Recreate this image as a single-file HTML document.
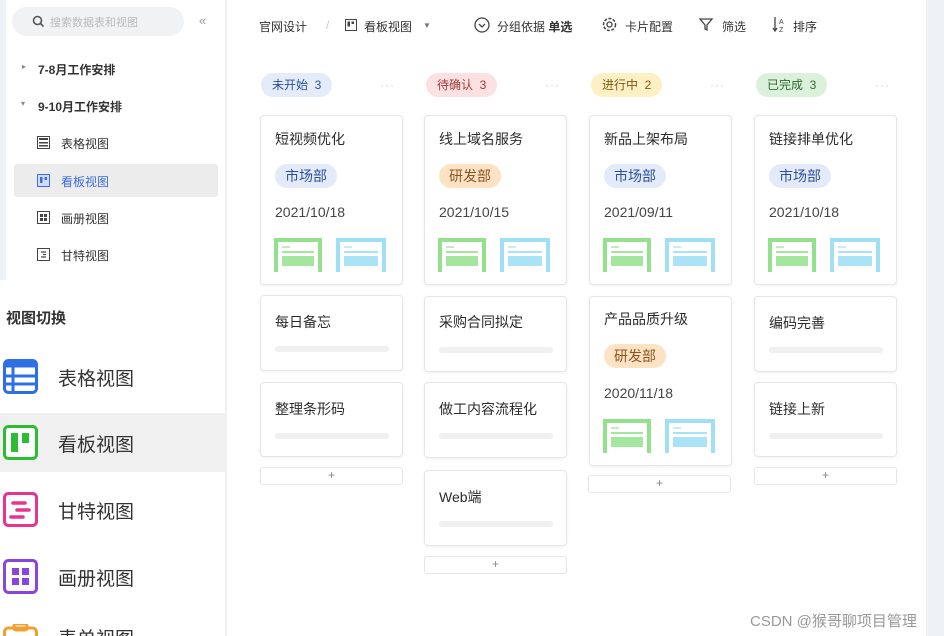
<!DOCTYPE html>
<html style="width:944px;height:636px;overflow:hidden"><head><meta charset="utf-8"><style>
*{margin:0;padding:0;box-sizing:border-box}
body{width:944px;height:636px;overflow:hidden;background:#fff;position:relative;font-family:"Liberation Sans","Noto Sans CJK SC",sans-serif;color:#333}
.a{position:absolute}
.card{position:absolute;width:143px;background:#fff;border:1px solid #e6e6e6;border-radius:4px;box-shadow:0 1px 3px rgba(0,0,0,.06)}
.t{position:absolute;left:14px;font-size:14px;color:#2b2b2b;line-height:16px}
.tag{position:absolute;left:14px;height:24px;line-height:24px;padding:0 10px;border-radius:12px;font-size:14px}
.mk{background:#e3ebfa;color:#2d4f9a}
.yf{background:#fde3c4;color:#8a5420}
.d{position:absolute;left:14px;font-size:14px;color:#444;line-height:16px}
.bar{position:absolute;left:14px;width:114px;height:6px;border-radius:3px;background:#f0f0f0}
.th{position:absolute}
.plus{position:absolute;width:143px;height:18px;border:1px solid #e6e6e6;border-radius:3px;text-align:center;font-size:12px;line-height:15px;color:#888;background:#fff}
.pill{position:absolute;top:73px;height:24px;line-height:24px;padding:0 11px;border-radius:12px;font-size:12px}
.dots{position:absolute;top:78px;font-size:12px;color:#ccc;letter-spacing:1px}
.si{position:absolute;font-size:12px;color:#333}
.lv{position:absolute;left:58px;font-size:19px;color:#333}
.tb{position:absolute;top:18px;font-size:12px;color:#333}
</style></head><body>
<div class="a" style="left:0;top:0;width:6px;height:280px;background:#eef1f6"></div>
<div class="a" style="left:12px;top:7px;width:172px;height:29px;border-radius:15px;background:#f1f2f4"></div>
<svg class="a" style="left:32px;top:15px" width="13" height="13" viewBox="0 0 13 13"><circle cx="5.5" cy="5.5" r="4" fill="none" stroke="#555" stroke-width="1.6"/><path d="M8.5 8.5L11.5 11.5" stroke="#555" stroke-width="1.6"/></svg>
<div class="si" style="left:50px;top:14px;color:#bbb;font-size:11px">搜索数据表和视图</div>
<div class="si" style="left:199px;top:13px;color:#999;font-size:13px">«</div>
<div class="si" style="left:22px;top:62px;font-size:8px;color:#888">▸</div>
<div class="si" style="left:38px;top:61px;font-weight:bold;font-size:12px">7-8月工作安排</div>
<div class="si" style="left:21px;top:99px;font-size:8px;color:#888">▾</div>
<div class="si" style="left:38px;top:98px;font-weight:bold;font-size:12px">9-10月工作安排</div>
<div class="a" style="left:14px;top:164px;width:204px;height:33px;background:#ececec;border-radius:3px"></div>
<svg class="a" style="left:37px;top:136px" width="13" height="13"><rect x="0.5" y="0.5" width="12" height="12" fill="#fff" stroke="#444"/><rect x="2" y="2" width="9" height="2" fill="#444"/><rect x="2" y="6" width="9" height="1.5" fill="#444"/><rect x="2" y="9" width="9" height="1.5" fill="#444"/></svg>
<div class="si" style="left:61px;top:135px">表格视图</div>
<svg class="a" style="left:37px;top:174px" width="13" height="13"><rect x="0.5" y="0.5" width="12" height="12" fill="#cfdcfb" stroke="#3d6de0"/><rect x="3" y="3" width="2.5" height="6" fill="#3d6de0"/><rect x="7.5" y="3" width="2.5" height="3" fill="#3d6de0"/></svg>
<div class="si" style="left:61px;top:173px;color:#3d6de0">看板视图</div>
<svg class="a" style="left:37px;top:211px" width="13" height="13"><rect x="0.5" y="0.5" width="12" height="12" fill="#fff" stroke="#444"/><rect x="3" y="3" width="3" height="3" fill="#444"/><rect x="7" y="3" width="3" height="3" fill="#444"/><rect x="3" y="7" width="3" height="3" fill="#444"/><rect x="7" y="7" width="3" height="3" fill="#444"/></svg>
<div class="si" style="left:61px;top:210px">画册视图</div>
<svg class="a" style="left:37px;top:248px" width="13" height="13"><rect x="0.5" y="0.5" width="12" height="12" fill="#fff" stroke="#444"/><path d="M4 4h5M6 6.5h3M4 9h5" stroke="#444" stroke-width="1.3"/></svg>
<div class="si" style="left:61px;top:247px">甘特视图</div>
<div class="a" style="left:225px;top:0;width:2px;height:636px;background:#f0f0f0"></div>
<div class="si" style="left:6px;top:307px;font-size:15px;font-weight:bold">视图切换</div>
<svg class="a" style="left:3px;top:359px" width="35" height="35"><rect x="1.5" y="1.5" width="32" height="32" rx="4" fill="#fff" stroke="#2f6fe4" stroke-width="3"/><rect x="1.5" y="1.5" width="32" height="7" fill="#2f6fe4"/><path d="M10 8v25M2 17h31M2 25h31" stroke="#2f6fe4" stroke-width="3"/></svg>
<div class="lv" style="top:364px">表格视图</div>
<div class="a" style="left:0;top:413px;width:225px;height:59px;background:#f0f0f0"></div>
<svg class="a" style="left:3px;top:425px" width="35" height="35"><rect x="1.5" y="1.5" width="32" height="32" rx="4" fill="#fff" stroke="#2dbd33" stroke-width="3"/><rect x="8" y="8" width="7" height="19" fill="#2dbd33"/><rect x="19" y="8" width="7" height="10" fill="#2dbd33"/></svg>
<div class="lv" style="top:430px">看板视图</div>
<svg class="a" style="left:3px;top:492px" width="35" height="35"><rect x="1.5" y="1.5" width="32" height="32" rx="4" fill="#fff" stroke="#e8348f" stroke-width="3"/><path d="M10 11h12M14 18h12M8 25h12" stroke="#e8348f" stroke-width="3.5" stroke-linecap="round"/></svg>
<div class="lv" style="top:497px">甘特视图</div>
<svg class="a" style="left:3px;top:559px" width="35" height="35"><rect x="1.5" y="1.5" width="32" height="32" rx="4" fill="#fff" stroke="#8a44e0" stroke-width="3"/><rect x="9" y="9" width="7" height="7" fill="#8a44e0"/><rect x="19" y="9" width="7" height="7" fill="#8a44e0"/><rect x="9" y="19" width="7" height="7" fill="#8a44e0"/><rect x="19" y="19" width="7" height="7" fill="#8a44e0"/></svg>
<div class="lv" style="top:564px">画册视图</div>
<svg class="a" style="left:3px;top:624px" width="35" height="12"><rect x="1.5" y="4" width="32" height="20" rx="4" fill="#fff" stroke="#f0a030" stroke-width="3"/><rect x="11" y="0" width="13" height="6" rx="2" fill="none" stroke="#f0a030" stroke-width="3"/></svg>
<div class="lv" style="top:624px">表单视图</div>
<div class="a" style="left:926px;top:0;width:18px;height:636px;background:#eef1f6"></div>
<div class="tb" style="left:259px">官网设计</div>
<div class="tb" style="left:326px;color:#ccc">/</div>
<svg class="a" style="left:345px;top:19px" width="12" height="12"><rect x="0.5" y="0.5" width="11" height="11" fill="#fff" stroke="#444"/><rect x="2.5" y="2.5" width="2.5" height="5" fill="#444"/><rect x="6.5" y="2.5" width="2.5" height="2.5" fill="#444"/></svg>
<div class="tb" style="left:364px">看板视图</div>
<div class="tb" style="left:423px;font-size:8px;top:21px;color:#777">▼</div>
<svg class="a" style="left:474px;top:17px" width="16" height="16"><circle cx="8" cy="8" r="7" fill="none" stroke="#444" stroke-width="1.3"/><path d="M5 7l3 3 3-3" fill="none" stroke="#444" stroke-width="1.3"/></svg>
<div class="tb" style="left:497px">分组依据 <b>单选</b></div>
<svg class="a" style="left:602px;top:17px" width="15" height="15"><circle cx="7.5" cy="7.5" r="6" fill="none" stroke="#444" stroke-width="1.5" stroke-dasharray="3 1.5"/><circle cx="7.5" cy="7.5" r="2.5" fill="none" stroke="#444" stroke-width="1.3"/></svg>
<div class="tb" style="left:625px">卡片配置</div>
<svg class="a" style="left:699px;top:17px" width="15" height="15"><path d="M1 2h12l-5 6v5l-2-1V8z" fill="none" stroke="#444" stroke-width="1.3"/></svg>
<div class="tb" style="left:722px">筛选</div>
<svg class="a" style="left:772px;top:16px" width="16" height="17"><path d="M3 1v14M1 12l2 3 2-3" fill="none" stroke="#444" stroke-width="1.3"/><text x="7" y="8" font-size="7" fill="#444" font-family="Liberation Sans">A</text><text x="7" y="16" font-size="7" fill="#444" font-family="Liberation Sans">Z</text></svg>
<div class="tb" style="left:793px">排序</div>
<div class="pill" style="left:261px;background:#e4ecfa;color:#2d4f9a">未开始&nbsp; 3</div>
<div class="dots" style="left:380px">···</div>
<div class="pill" style="left:426px;background:#fbe1e1;color:#a23a3a">待确认&nbsp; 3</div>
<div class="dots" style="left:545px">···</div>
<div class="pill" style="left:591px;background:#fdf0c4;color:#7a5a10">进行中&nbsp; 2</div>
<div class="dots" style="left:710px">···</div>
<div class="pill" style="left:756px;background:#dcf1dc;color:#2f6a2f">已完成&nbsp; 3</div>
<div class="dots" style="left:875px">···</div>
<svg width="0" height="0" style="position:absolute"><defs>
<g id="tg"><rect x="0" y="0" width="48" height="4" fill="#93e08d"/><rect x="0" y="0" width="4" height="34" fill="#93e08d"/><rect x="44" y="0" width="4" height="34" fill="#93e08d"/><rect x="8" y="8" width="8" height="2" fill="#bfeebb"/><rect x="8" y="13" width="32" height="2" fill="#a5e69f"/><rect x="8" y="18" width="32" height="10" fill="#a5e69f"/></g>
<g id="tb"><rect x="0" y="0" width="50" height="4" fill="#9fe0f5"/><rect x="0" y="0" width="4" height="34" fill="#9fe0f5"/><rect x="46" y="0" width="4" height="34" fill="#9fe0f5"/><rect x="8" y="8" width="8" height="2" fill="#c6ecf8"/><rect x="8" y="13" width="34" height="2" fill="#a9e3f5"/><rect x="8" y="18" width="34" height="10" fill="#a9e3f5"/></g>
</defs></svg>
<div class="card" style="left:260px;top:115px;height:170px"><div class="t" style="top:15px">短视频优化</div><div class="tag mk" style="top:48px">市场部</div><div class="d" style="top:88px">2021/10/18</div><svg class="th" style="left:13px;top:122px" width="112" height="34"><use href="#tg"/><use href="#tb" x="62"/></svg></div>
<div class="card" style="left:260px;top:295px;height:76px"><div class="t" style="top:18px">每日备忘</div><div class="bar" style="top:50px"></div></div>
<div class="card" style="left:260px;top:382px;height:75px"><div class="t" style="top:18px">整理条形码</div><div class="bar" style="top:50px"></div></div>
<div class="plus" style="left:260px;top:467px">+</div>
<div class="card" style="left:424px;top:115px;height:170px"><div class="t" style="top:15px">线上域名服务</div><div class="tag yf" style="top:48px">研发部</div><div class="d" style="top:88px">2021/10/15</div><svg class="th" style="left:13px;top:122px" width="112" height="34"><use href="#tg"/><use href="#tb" x="62"/></svg></div>
<div class="card" style="left:424px;top:296px;height:76px"><div class="t" style="top:17px">采购合同拟定</div><div class="bar" style="top:50px"></div></div>
<div class="card" style="left:424px;top:382px;height:76px"><div class="t" style="top:18px">做工内容流程化</div><div class="bar" style="top:50px"></div></div>
<div class="card" style="left:424px;top:470px;height:76px"><div class="t" style="top:18px">Web端</div><div class="bar" style="top:50px"></div></div>
<div class="plus" style="left:424px;top:556px">+</div>
<div class="card" style="left:589px;top:115px;height:170px"><div class="t" style="top:15px">新品上架布局</div><div class="tag mk" style="top:48px">市场部</div><div class="d" style="top:88px">2021/09/11</div><svg class="th" style="left:13px;top:122px" width="112" height="34"><use href="#tg"/><use href="#tb" x="62"/></svg></div>
<div class="card" style="left:589px;top:296px;height:170px"><div class="t" style="top:14px">产品品质升级</div><div class="tag yf" style="top:47px">研发部</div><div class="d" style="top:88px">2020/11/18</div><svg class="th" style="left:13px;top:122px" width="112" height="34"><use href="#tg"/><use href="#tb" x="62"/></svg></div>
<div class="plus" style="left:588px;top:475px">+</div>
<div class="card" style="left:754px;top:115px;height:170px"><div class="t" style="top:15px">链接排单优化</div><div class="tag mk" style="top:48px">市场部</div><div class="d" style="top:88px">2021/10/18</div><svg class="th" style="left:13px;top:122px" width="112" height="34"><use href="#tg"/><use href="#tb" x="62"/></svg></div>
<div class="card" style="left:754px;top:296px;height:76px"><div class="t" style="top:18px">编码完善</div><div class="bar" style="top:50px"></div></div>
<div class="card" style="left:754px;top:382px;height:75px"><div class="t" style="top:18px">链接上新</div><div class="bar" style="top:50px"></div></div>
<div class="plus" style="left:754px;top:467px">+</div>
<div class="a" style="left:750px;top:610px;font-size:15px;color:#999">CSDN @猴哥聊项目管理</div>
</body></html>
